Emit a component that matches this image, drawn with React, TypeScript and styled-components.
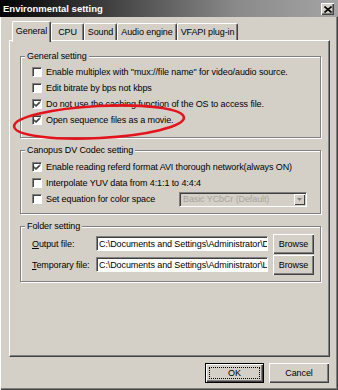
import styled, { createGlobalStyle } from 'styled-components';

const GlobalStyle = createGlobalStyle`
  html, body {
    margin: 0;
    padding: 0;
    background: #d4d0c8;
  }
  * {
    box-sizing: border-box;
  }
`;

const FONT = `'Liberation Sans', Arial, sans-serif`;

const TABS = ['General', 'CPU', 'Sound', 'Audio engine', 'VFAPI plug-in'];
const TAB_WIDTHS = [39, 33, 33, 60, 61];

const GENERAL_OPTIONS = [
  { label: 'Enable multiplex with "mux://file name" for video/audio source.', checked: false },
  { label: 'Edit bitrate by bps not kbps', checked: false },
  { label: 'Do not use the caching function of the OS to access file.', checked: true },
  { label: 'Open sequence files as a movie.', checked: true },
];

const CheckBox = ({ checked }: { checked: boolean }) => (
  <St.CheckBox>
    {checked && (
      <svg width="8" height="8" viewBox="0 0 8 8">
        <path d="M1 3.5 L3 5.5 L7 1.5 M1 4.5 L3 6.5 L7 2.5" stroke="#000" strokeWidth="1" fill="none" />
      </svg>
    )}
  </St.CheckBox>
);

const App = () => {
  return (
    <>
      <GlobalStyle />
      <St.Window>
        <St.TitleBar>
          <St.Title>Environmental setting</St.Title>
          <St.CloseButton>
            <svg width="8" height="7" viewBox="0 0 8 7">
              <path d="M0.5 0.5 L7.5 6.5 M7.5 0.5 L0.5 6.5" stroke="#000" strokeWidth="1.6" />
            </svg>
          </St.CloseButton>
        </St.TitleBar>

        <St.Body>
          <St.TabStrip>
            {TABS.map((tab, i) => (
              <St.Tab key={tab} $active={i === 0} style={{ width: TAB_WIDTHS[i] }}>
                {tab}
              </St.Tab>
            ))}
          </St.TabStrip>

          <St.Panel>
            <St.GroupBox $pt={7} $pb={9}>
              <St.Legend>General setting</St.Legend>
              {GENERAL_OPTIONS.map((opt) => (
                <St.CheckRow key={opt.label}>
                  <CheckBox checked={opt.checked} />
                  <St.Label>{opt.label}</St.Label>
                </St.CheckRow>
              ))}
            </St.GroupBox>

            <St.GroupBox $pt={8} $pb={6}>
              <St.Legend>Canopus DV Codec setting</St.Legend>
              <St.CheckRow>
                <CheckBox checked />
                <St.Label>Enable reading referd format AVI thorough network(always ON)</St.Label>
              </St.CheckRow>
              <St.CheckRow>
                <CheckBox checked={false} />
                <St.Label>Interpolate YUV data from 4:1:1 to 4:4:4</St.Label>
              </St.CheckRow>
              <St.CheckRow>
                <CheckBox checked={false} />
                <St.Label>Set equation for color space</St.Label>
                <St.Combo>
                  <St.ComboText>Basic YCbCr (Default)</St.ComboText>
                  <St.ComboArrow>
                    <svg width="5" height="3" viewBox="0 0 5 3">
                      <path d="M0 0 H5 L2.5 3 Z" fill="#808080" />
                    </svg>
                  </St.ComboArrow>
                </St.Combo>
              </St.CheckRow>
            </St.GroupBox>

            <St.GroupBox $pt={6} $pb={6}>
              <St.Legend>Folder setting</St.Legend>
              <St.FolderRow>
                <St.FieldLabel>
                  <u>O</u>utput file:
                </St.FieldLabel>
                <St.PathInput>C:\Documents and Settings\Administrator\D</St.PathInput>
                <St.Button $w={41} $h={20}>Browse</St.Button>
              </St.FolderRow>
              <St.FolderRow>
                <St.FieldLabel>
                  <u>T</u>emporary file:
                </St.FieldLabel>
                <St.PathInput>C:\Documents and Settings\Administrator\L</St.PathInput>
                <St.Button $w={41} $h={20}>Browse</St.Button>
              </St.FolderRow>
            </St.GroupBox>
          </St.Panel>

          <St.ButtonRow>
            <St.Button $w={59} $h={20} $default>
              <St.Focus>OK</St.Focus>
            </St.Button>
            <St.Button $w={60} $h={20}>Cancel</St.Button>
          </St.ButtonRow>
        </St.Body>

        <St.Annotation width="338" height="390" viewBox="0 0 338 390">
          <ellipse
            cx="99"
            cy="122"
            rx="85"
            ry="16"
            transform="rotate(-3 99 122)"
            fill="none"
            stroke="#e4141c"
            strokeWidth="2.6"
          />
        </St.Annotation>
      </St.Window>
    </>
  );
};

export default App;

const St = {
  Window: styled.div`
    position: relative;
    display: flex;
    flex-direction: column;
    width: 338px;
    height: 390px;
    background: #d4d0c8;
    box-shadow: inset 1px 0 #ffffff, inset -1px -1px #404040, inset -2px -2px #808080;
    font-family: ${FONT};
    font-size: 9px;
    letter-spacing: -0.1px;
    color: #000;
    overflow: hidden;
  `,

  TitleBar: styled.div`
    display: flex;
    align-items: center;
    justify-content: space-between;
    height: 17px;
    padding: 0 4px 0 3px;
    background: linear-gradient(90deg, #030303 0%, #3c3c3c 30%, #8a8a8a 70%, #a4a4a4 100%);
  `,

  Title: styled.span`
    color: #ffffff;
    font-weight: bold;
    font-size: 9.5px;
    letter-spacing: 0;
  `,

  CloseButton: styled.div`
    display: flex;
    align-items: center;
    justify-content: center;
    width: 13px;
    height: 12px;
    margin-top: 1px;
    background: #d4d0c8;
    box-shadow: inset 1px 1px #ffffff, inset -1px -1px #404040, inset -2px -2px #808080;
  `,

  Body: styled.div`
    display: flex;
    flex-direction: column;
    padding: 4px 8px 0 9px;
  `,

  TabStrip: styled.div`
    display: flex;
    align-items: flex-end;
    height: 19px;
    padding-left: 3px;
    position: relative;
    z-index: 1;
  `,

  Tab: styled.div<{ $active: boolean }>`
    display: flex;
    align-items: center;
    justify-content: center;
    height: ${({ $active }) => ($active ? '21px' : '17px')};
    margin-bottom: ${({ $active }) => ($active ? '-2px' : '0')};
    padding-bottom: ${({ $active }) => ($active ? '2px' : '0')};
    background: #d4d0c8;
    border-top: 1px solid #ffffff;
    border-left: 1px solid #ffffff;
    border-right: 1px solid #404040;
    border-radius: 2px 2px 0 0;
    box-shadow: inset -1px 0 #808080;
    white-space: nowrap;
  `,

  Panel: styled.div`
    display: flex;
    flex-direction: column;
    gap: 12px;
    width: 321px;
    height: 317px;
    padding: 15px 8px 0 10px;
    border-top: 1px solid #ffffff;
    border-left: 1px solid #ffffff;
    border-right: 1px solid #404040;
    border-bottom: 1px solid #404040;
    box-shadow: inset -1px -1px #808080;
  `,

  GroupBox: styled.div<{ $pt: number; $pb: number }>`
    position: relative;
    display: flex;
    flex-direction: column;
    width: 301px;
    padding: ${({ $pt, $pb }) => `${$pt}px 0 ${$pb}px 11px`};
    border: 1px solid #808080;
    box-shadow: inset 1px 1px #ffffff, 1px 1px #ffffff;
  `,

  Legend: styled.span`
    position: absolute;
    top: -6px;
    left: 4px;
    padding: 0 2px;
    line-height: 11px;
    background: #d4d0c8;
  `,

  CheckRow: styled.div`
    display: flex;
    align-items: center;
    gap: 4px;
    height: 16px;
  `,

  CheckBox: styled.span`
    display: flex;
    align-items: center;
    justify-content: center;
    flex: none;
    width: 10px;
    height: 10px;
    background: #ffffff;
    border-top: 1px solid #808080;
    border-left: 1px solid #808080;
    border-right: 1px solid #ffffff;
    border-bottom: 1px solid #ffffff;
    box-shadow: inset 1px 1px #404040;
  `,

  Label: styled.span`
    white-space: nowrap;
  `,

  Combo: styled.div`
    display: flex;
    align-items: center;
    width: 128px;
    height: 15px;
    margin-left: auto;
    margin-right: 13px;
    background: #d4d0c8;
    border-top: 1px solid #808080;
    border-left: 1px solid #808080;
    border-right: 1px solid #ffffff;
    border-bottom: 1px solid #ffffff;
    box-shadow: inset 1px 1px #404040;
  `,

  ComboText: styled.span`
    flex: 1;
    padding-left: 3px;
    color: #a8a49c;
    white-space: nowrap;
  `,

  ComboArrow: styled.span`
    display: flex;
    align-items: center;
    justify-content: center;
    width: 11px;
    height: 11px;
    margin-right: 1px;
    background: #d4d0c8;
    box-shadow: inset 1px 1px #ffffff, inset -1px -1px #404040;
  `,

  FolderRow: styled.div`
    display: flex;
    align-items: center;
    height: 21px;
  `,

  FieldLabel: styled.span`
    width: 64px;
    flex: none;
    white-space: nowrap;
  `,

  PathInput: styled.div`
    width: 172px;
    height: 15px;
    margin-right: 5px;
    padding: 1px 2px 0;
    overflow: hidden;
    white-space: nowrap;
    line-height: 12px;
    background: #ffffff;
    border-top: 1px solid #808080;
    border-left: 1px solid #808080;
    border-right: 1px solid #ffffff;
    border-bottom: 1px solid #ffffff;
    box-shadow: inset 1px 1px #404040;
  `,

  Button: styled.div<{ $w: number; $h: number; $default?: boolean }>`
    display: flex;
    align-items: center;
    justify-content: center;
    flex: none;
    width: ${({ $w }) => $w}px;
    height: ${({ $h }) => $h}px;
    background: #d4d0c8;
    border: ${({ $default }) => ($default ? '1px solid #000' : 'none')};
    box-shadow: inset 1px 1px #ffffff, inset -1px -1px #404040, inset -2px -2px #808080;
  `,

  Focus: styled.span`
    display: flex;
    align-items: center;
    justify-content: center;
    width: calc(100% - 6px);
    height: calc(100% - 6px);
    border: 1px dotted #000;
  `,

  ButtonRow: styled.div`
    display: flex;
    justify-content: flex-end;
    gap: 5px;
    margin-top: 6px;
    padding-right: 1px;
  `,

  Annotation: styled.svg`
    position: absolute;
    top: 0;
    left: 0;
    pointer-events: none;
  `,
};
